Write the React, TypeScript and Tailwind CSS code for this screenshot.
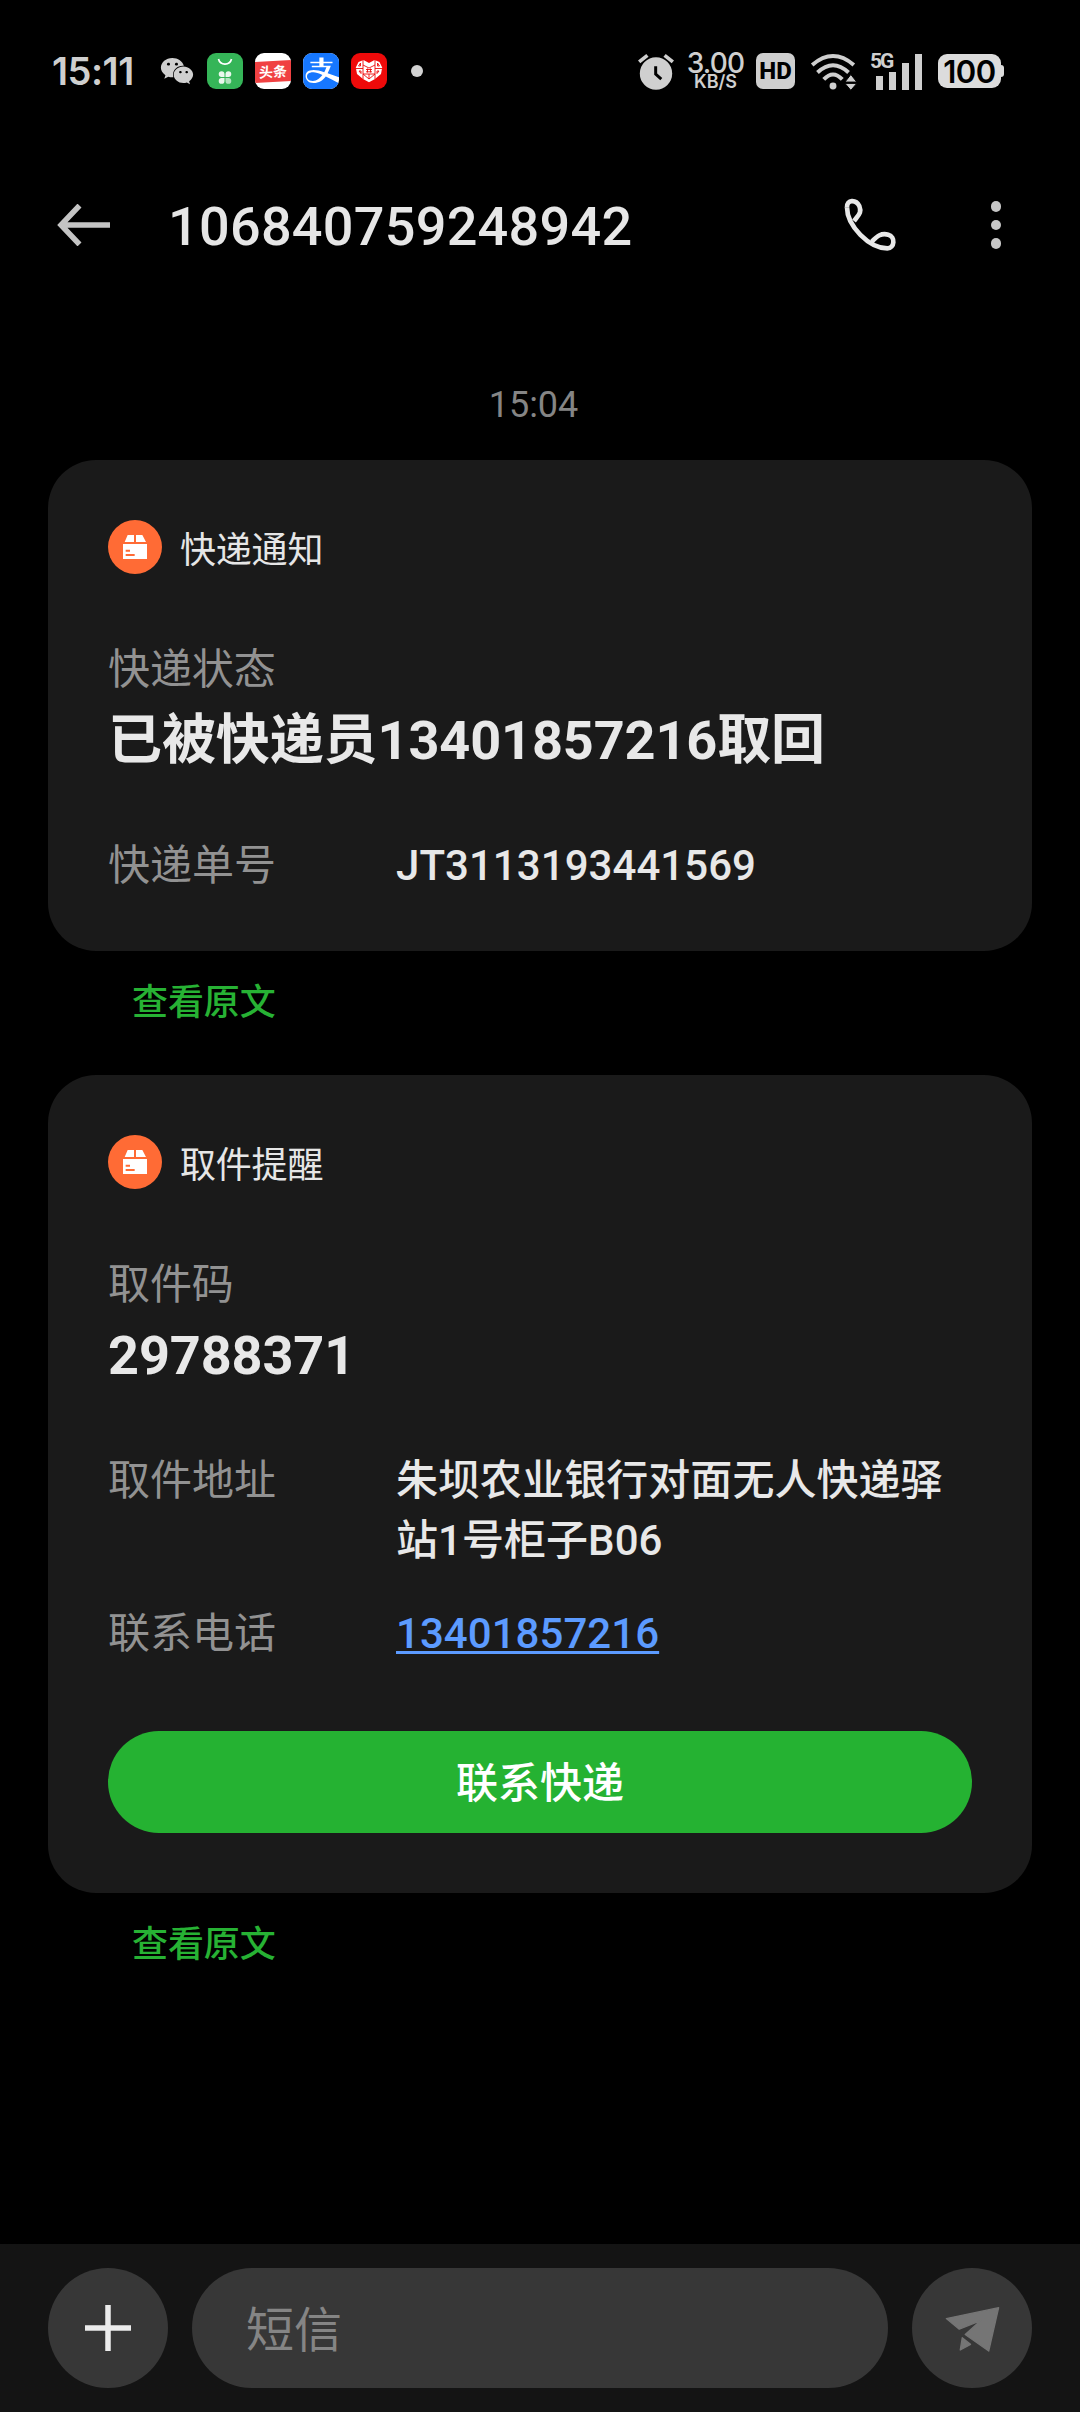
import { useState, type ReactNode } from 'react';
import { FaAlipay, FaWeixin } from 'react-icons/fa';

const PackageIcon = () => (
    <svg viewBox="204 225 162 162" className="size-[54px] shrink-0">
        <circle cx="285" cy="306" r="81" fill="#ff6b35" />
        <path d="M263 270h19v21h-28zM288 270h19l11 21h-30zM249 297h72v45h-72z" fill="#fff" />
        <path d="M257 314h13v6h-13zM257 327h27v6h-27z" fill="#ff6b35" />
    </svg>
);

const StatusBar = () => (
    <div className="flex h-[142px] items-center pl-[51px] pr-[76px] text-[#cfcfcf]">
        <span className="w-[109px] pl-px font-['Inter'] text-[38px] font-semibold leading-none tracking-[-0.5px]">15:11</span>
        <FaWeixin className="h-[30px] w-[34px]" />
        <div className="ml-[13px] flex gap-3">
            <svg viewBox="0 0 36 36" className="size-9 rounded-[9px] bg-[#35b558]">
                <path d="M11.5 6a6.7 6.7 0 0 0 13 0" fill="none" stroke="#fff" strokeWidth="1.7" />
                <g fill="#e9f8ed">
                    <path d="M17.5 24h-2.900a2.900 2.900 0 1 1 2.900-2.900zM18.500 24h2.900a2.900 2.900 0 1 0-2.900-2.900zM17.500 25h-2.900a2.900 2.900 0 1 0 2.900 2.900z" />
                    <path d="M18.500 25h2.900a2.900 2.900 0 1 1-2.900 2.900z" opacity="0.7" />
                </g>
            </svg>
            <div className="flex size-9 items-center overflow-hidden rounded-[9px] bg-white">
                <div className="flex h-[21px] w-full -skew-y-3 items-center justify-center bg-[#f04142] text-[14px] font-bold leading-none text-white">
                    头条
                </div>
            </div>
            <div className="flex size-9 items-center justify-center overflow-hidden rounded-[9px] bg-white">
                <FaAlipay className="h-[42px] w-[37px] shrink-0 text-[#1677ff]" />
            </div>
            <svg viewBox="0 0 36 36" className="size-9 rounded-[9px] bg-[#ee0a0a]">
                <path d="M18 10 12.500 7 7.500 9 4.800 14.500l1.200 6.500L12 26l6 3.200L24 26l6-5 1.200-6.500L28.500 9l-5-2z" fill="#fff" />
                <g stroke="#ee0a0a" strokeWidth="0.9" fill="none">
                    <path d="M12 7v19M24 7v19M5 15.500h7M24 15.500h7M12 12l6 3 6-3M12 21l6 5 6-5M12 21h12M18 21v5" />
                    <path d="M16.500 15.500v4M19.500 15.500v4M15 16.500h6M15 18.800h6" />
                    <path d="M9.500 10v3h-2zM26.500 10v3h2zM8 18h2v2.500zM28 18h-2v2.500z" />
                </g>
            </svg>
        </div>
        <span className="ml-6 size-3 rounded-full bg-[#d2d2d2]" />

        <div className="ml-auto flex items-center">
            <svg viewBox="54 64 108 112" className="h-[37px] w-9">
                <circle cx="108" cy="126" r="49" fill="#cfcfcf" />
                <path d="M57 91l25-20M134 71l25 20" stroke="#cfcfcf" strokeWidth="11" />
                <path d="M107 104v24l17 15" fill="none" stroke="#000" strokeWidth="9" />
            </svg>
            <div className="ml-3 flex w-[59px] flex-col items-center pt-0.5 font-['Inter']">
                <span className="text-[28px] font-medium leading-[20px] tracking-[-0.8px]">3.00</span>
                <span className="text-[18px] font-semibold leading-[18px]">KB/S</span>
            </div>
            <div className="ml-[11px] flex h-9 w-[39px] items-center justify-center rounded-[7px] bg-[#cfcfcf] font-['Roboto'] text-[24px] font-extrabold leading-none text-black">
                HD
            </div>
            <svg viewBox="570 60 144 118" className="ml-[15px] h-[39px] w-12">
                <g fill="none" stroke="#cfcfcf" strokeWidth="12">
                    <path d="M576 99q63-54 126 0" />
                    <path d="M592 122q47-44 94 0" />
                    <path d="M611 143q28-30 56 0" />
                </g>
                <circle cx="639" cy="163" r="10.500" fill="#cfcfcf" />
                <path d="M675 151l18-23 18 23zM675 155h36l-18 21z" fill="#cfcfcf" stroke="#000" strokeWidth="3" />
            </svg>
            <div className="ml-[12px] flex h-[37px] items-end">
                <span className="mr-[-16px] w-[22px] self-start whitespace-nowrap font-['Roboto'] text-[21px] font-bold leading-[17px] tracking-[-2px]">5G</span>
                <div className="flex items-end gap-1.5">
                    <i className="h-3.5 w-[7px] bg-[#cfcfcf]" />
                    <i className="h-[18px] w-[7px] bg-[#cfcfcf]" />
                    <i className="h-[27px] w-[7px] bg-[#cfcfcf]" />
                    <i className="h-9 w-[7px] bg-[#cfcfcf]" />
                </div>
            </div>
            <div className="ml-4 flex items-center">
                <div className="flex h-[34px] w-[63px] items-center justify-center rounded-[9px] bg-[#dcdcdc] font-['Inter'] text-[31px] font-semibold leading-none tracking-[-0.5px] text-black">
                    100
                </div>
                <i className="h-3 w-[3px] rounded-r-sm bg-[#dcdcdc]" />
            </div>
        </div>
    </div>
);

const Header = ({ title }: { title: string }) => (
    <header className="flex h-[166px] items-center pl-[57px] pr-[79px]">
        <button aria-label="返回">
            <svg viewBox="0 0 54 42" className="h-[42px] w-[54px]" fill="none" stroke="#c4c4c4" strokeWidth="5.5">
                <path d="M3 21h50M22.500 1.500 4 21l18.500 19.500" />
            </svg>
        </button>
        <h1 className="ml-[57px] pt-[3px] text-[54px] font-medium leading-none tracking-[0.27px] text-[#e6e6e6]">{title}</h1>
        <div className="ml-auto flex items-center">
            <svg viewBox="186 81 168 168" className="size-14" fill="none" stroke="#e8e8e8" strokeWidth="14" strokeLinejoin="round">
                <path d="M201 112C201 168 268 235 322 235C344 235 347 200 325 194C304 188 292 198 276 214" />
                <path d="M201 112C200 88 228 88 238 108C246 128 236 134 222 153" />
            </svg>
            <div className="ml-[93px] flex flex-col gap-2">
                <i className="size-[10.5px] rounded-full bg-[#c6c6c6]" />
                <i className="size-[10.5px] rounded-full bg-[#c6c6c6]" />
                <i className="size-[10.5px] rounded-full bg-[#c6c6c6]" />
            </div>
        </div>
    </header>
);

interface CardProps {
    title: string;
    label: string;
    value: string;
    className: string;
    children: ReactNode;
}

const Card = ({ title, label, value, className, children }: CardProps) => (
    <>
        <section className={`mx-12 rounded-[48px] bg-[#1a1a1a] px-[60px] pt-[60px] ${className}`}>
            <div className="flex h-[54px] items-center gap-[18px]">
                <PackageIcon />
                <h2 className="pt-[7px] text-[36px] leading-[48px] tracking-[-0.2px] text-[#e6e6e6]">{title}</h2>
            </div>
            <p className="mt-[66px] text-[42px] leading-[60px] tracking-[-0.1px] text-[#929292]">{label}</p>
            <p className="mt-px text-[54px] font-bold leading-[80px] tracking-[-0.1px] text-[#e8e8e8]">{value}</p>
            {children}
        </section>
        <a className="mt-7 block pl-[132px] text-[36px] font-medium leading-[48px] tracking-[-0.1px] text-[#27b234]">查看原文</a>
    </>
);

const Row = ({ label, children }: { label: string; children: ReactNode }) => (
    <div className="flex text-[42px] leading-[60px]">
        <span className="w-72 shrink-0 text-[#929292]">{label}</span>
        <span className="font-medium tracking-[0.05px] text-[#e8e8e8]">{children}</span>
    </div>
);

const App = () => {
    const [message, setMessage] = useState('');

    return (
        <div className="flex h-[2412px] w-[1080px] flex-col overflow-hidden bg-black font-['Roboto','Noto_Sans_CJK_SC',sans-serif]">
            <StatusBar />
            <Header title="106840759248942" />

            <main className="flex-1">
                <p className="pt-[73px] pb-[31px] pr-[13px] text-center text-[36px] leading-[48px] text-[#858585]">15:04</p>

                <Card title="快递通知" label="快递状态" value="已被快递员13401857216取回" className="pb-[55px]">
                    <div className="mt-[55px]">
                        <Row label="快递单号">JT3113193441569</Row>
                    </div>
                </Card>

                <Card title="取件提醒" label="取件码" value="29788371" className="mt-12 pb-[60px]">
                    <div className="mt-[55px] flex flex-col gap-[33px]">
                        <Row label="取件地址">朱坝农业银行对面无人快递驿站1号柜子B06</Row>
                        <Row label="联系电话">
                            <a className="text-[#5c9bff] underline decoration-[3px] underline-offset-[3px]">13401857216</a>
                        </Row>
                    </div>
                    <button className="mt-[67px] h-[102px] w-full rounded-full bg-[#25b232] pt-[3px] text-[42px] font-medium text-white">
                        联系快递
                    </button>
                </Card>
            </main>

            <footer className="flex h-[168px] items-center gap-6 bg-[#141414] px-12">
                <button aria-label="添加" className="flex size-[120px] items-center justify-center rounded-full bg-[#373737]">
                    <svg viewBox="0 0 46 46" className="size-[46px]" stroke="#ececec" strokeWidth="5.5">
                        <path d="M23 0v46M0 23h46" />
                    </svg>
                </button>
                <input
                    type="text"
                    value={message}
                    onChange={(e) => setMessage(e.target.value)}
                    placeholder="短信"
                    className="h-[120px] min-w-0 flex-1 rounded-full bg-[#373737] px-[54px] pt-1 text-[48px] text-white placeholder:text-[#858585] focus:outline-none"
                />
                <button aria-label="发送" className="flex size-[120px] items-center justify-center rounded-full bg-[#373737]">
                    <svg viewBox="490 255 172 142" className="h-[47px] w-[57px]" fill="#757575" stroke="#757575" strokeWidth="4" strokeLinejoin="round">
                        <path d="M497 296 655 263 625 394 554 344 601 302 536 328z" />
                        <path d="M545 354l25 20-31 17z" />
                    </svg>
                </button>
            </footer>
        </div>
    );
};

export default App;
